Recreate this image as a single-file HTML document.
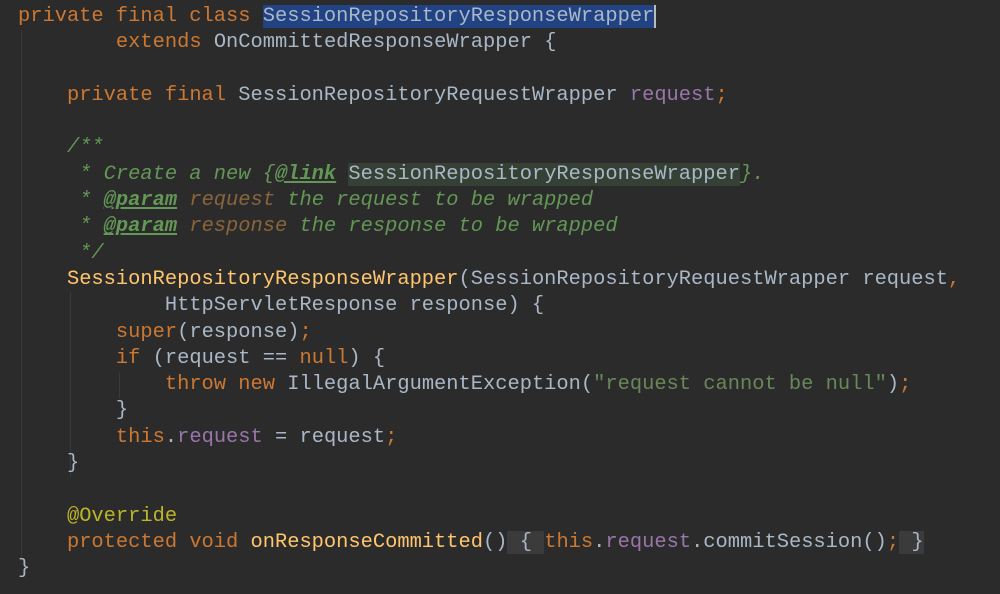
<!DOCTYPE html>
<html><head><meta charset="utf-8"><style>
html,body{margin:0;padding:0;background:#2b2b2b;width:1000px;height:594px;overflow:hidden}
pre{margin:0;position:absolute;left:18px;top:4px;font-family:"Liberation Mono",monospace;font-size:20.4px;line-height:26.3px;color:#a9b7c6;white-space:pre}
.k{color:#cc7832}.f{color:#9876aa}.m{color:#ffc66d}.s{color:#6a8759}.a{color:#bbb529}
.d{color:#629755;font-style:italic}.t{color:#629755;font-weight:bold;text-decoration:underline;font-style:italic}
.p{color:#8a653b;font-style:italic}.l{background:#344134;color:#a9b7c6}
.sel{background:#214283;border-right:2px solid #bbb}
.b{background:#3b3b3b}
.g{position:absolute;width:1px;background:#3a3a3a}
</style></head><body>
<div class="g" style="left:21px;top:30px;height:528px"></div>
<div class="g" style="left:70px;top:292px;height:185px"></div>
<div class="g" style="left:119px;top:372px;height:26px"></div>
<pre><span class="k">private final class </span><span class="sel">SessionRepositoryResponseWrapper</span>
        <span class="k">extends </span>OnCommittedResponseWrapper {

    <span class="k">private final </span>SessionRepositoryRequestWrapper <span class="f">request</span><span class="k">;</span>

    <span class="d">/**</span>
<span class="d">     * Create a new {</span><span class="t">@link</span><span class="d"> </span><span class="l">SessionRepositoryResponseWrapper</span><span class="d">}.</span>
<span class="d">     * </span><span class="t">@param</span><span class="d"> </span><span class="p">request</span><span class="d"> the request to be wrapped</span>
<span class="d">     * </span><span class="t">@param</span><span class="d"> </span><span class="p">response</span><span class="d"> the response to be wrapped</span>
<span class="d">     */</span>
    <span class="m">SessionRepositoryResponseWrapper</span>(SessionRepositoryRequestWrapper request<span class="k">,</span>
            HttpServletResponse response) {
        <span class="k">super</span>(response)<span class="k">;</span>
        <span class="k">if </span>(request == <span class="k">null</span>) {
            <span class="k">throw new </span>IllegalArgumentException(<span class="s">"request cannot be null"</span>)<span class="k">;</span>
        }
        <span class="k">this</span>.<span class="f">request</span> = request<span class="k">;</span>
    }

    <span class="a">@Override</span>
    <span class="k">protected void </span><span class="m">onResponseCommitted</span>()<span class="b"> { </span><span class="k">this</span>.<span class="f">request</span>.commitSession()<span class="k">;</span><span class="b"> }</span>
}</pre>
</body></html>
